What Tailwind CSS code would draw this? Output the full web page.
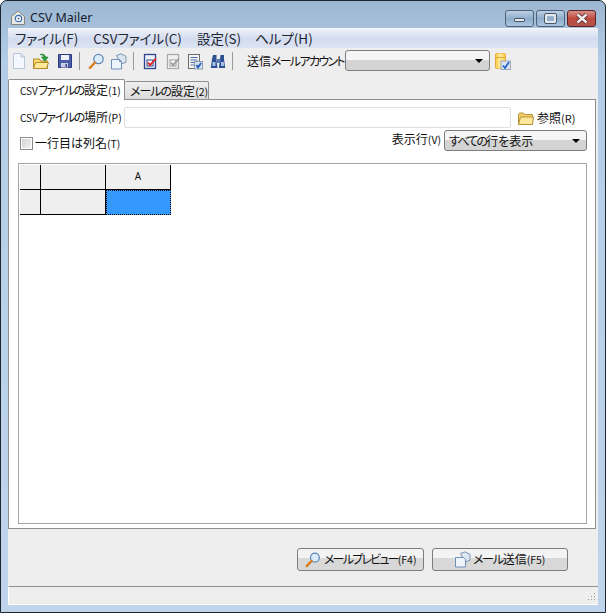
<!DOCTYPE html>
<html lang="ja"><head><meta charset="utf-8">
<script src="https://cdn.jsdelivr.net/npm/@tailwindcss/browser@4"></script>
</head>
<body class="bg-white">
<div class="w-[606px] h-[613px] overflow-hidden rounded-t-[7px] border border-[#1c2630] bg-[#bdd3ea] bg-gradient-to-b from-[#9db7d2] via-[#b4cde6] via-[10%] to-[#bfd5ec] flex flex-col text-[#111] font-['Noto_Sans_CJK_JP','Noto_Sans',sans-serif] [font-feature-settings:'palt'] text-[12px] leading-none">
  <div class="h-[27px] shrink-0 flex items-start pl-[9px] pr-[8px]">
    <svg class="mt-[9px] w-[16px] h-[16px]" viewBox="0 0 16 16"><path d="M1.500 6.500 8 1l6.500 5.500v8h-13z" fill="#e8e8e4" stroke="#85857f"/><circle cx="8.500" cy="8.500" r="3.200" fill="#f4f6fa" stroke="#3a6fb0" stroke-width="1.200"/><circle cx="8.500" cy="8.500" r="1" fill="#3a6fb0"/></svg>
    <span class="ml-[4px] mt-[8px] text-[12.500px] leading-[18px] text-[#15202c] font-['Noto_Sans','Noto_Sans_CJK_JP',sans-serif]">CSV Mailer</span>
    <div class="ml-auto mt-[9px] flex gap-[2px] pr-[1px]">
      <div class="w-[29px] h-[17px] rounded-[3px] border border-[#4c6078] bg-gradient-to-b from-[#bdd0e4] via-[#8fadcb] to-[#a9c6e0] flex items-center justify-center"><div class="w-[11px] h-[4px] mt-[3px] bg-[#e4e8ec] border border-[#4a5a6c] rounded-[1px]"></div></div>
      <div class="w-[29px] h-[17px] rounded-[3px] border border-[#4c6078] bg-gradient-to-b from-[#bdd0e4] via-[#8fadcb] to-[#a9c6e0] flex items-center justify-center"><div class="w-[11px] h-[9px] border-2 border-[#e4e8ec] outline outline-[#4a5a6c] rounded-[1px]"></div></div>
      <div class="w-[29px] h-[17px] rounded-[3px] border border-[#5a2326] bg-gradient-to-b from-[#d69088] via-[#bf4a3e] to-[#b1554d] flex items-center justify-center">
        <svg class="w-[14px] h-[11px]" viewBox="0 0 14 11"><path d="M2.500 1.500 11.500 9.500M11.500 1.500 2.500 9.500" stroke="#4a2426" stroke-width="4"/><path d="M2.500 1.500 11.500 9.500M11.500 1.500 2.500 9.500" stroke="#f2eeee" stroke-width="2.400"/></svg>
      </div>
    </div>
  </div>
  <div class="flex-1 mx-[7px] min-h-0 flex flex-col bg-[#eeeeee] border-t border-[#f4f7fb]">
    <div class="h-[19px] shrink-0 flex items-center bg-gradient-to-b from-[#eef1f9] via-[#d3dcef] to-[#dbe3f3] text-[13.500px] text-[#1d2530]">
      <span class="ml-[7px]">ファイル(F)</span>
      <span class="ml-[15px]">CSVファイル(C)</span>
      <span class="ml-[15px]">設定(S)</span>
      <span class="ml-[14px]">ヘルプ(H)</span>
    </div>
    <div class="h-[26px] shrink-0 flex items-center">
      <svg class="shrink-0 ml-[3px] w-[16px] h-[18px]" viewBox="0 0 16 18"><path d="M2.500 1.500H10L13.500 5v11.500h-11z" fill="#f4f7fd" stroke="#b8c6dc"/><path d="M10 1.500V5h3.500" fill="#dde5f2" stroke="#b8c6dc"/></svg>
      <svg class="shrink-0 ml-[5px] w-[19px] h-[18px]" viewBox="0 0 19 18"><path d="M1.500 16.500V7h6l1 2h7v7.500z" fill="#fbd96c" stroke="#b28a2a"/><path d="M1.500 16.500 3.500 10.500h13l-2 6z" fill="#fde997" stroke="#b28a2a"/><path d="M8 2.500c3-1 5 0 5.500 2.500H16l-3 4.500L9.500 5H12c-.5-1.500-2-2.300-4-2.500z" fill="#2f9e3c" stroke="#1f7a2b" stroke-width=".6"/></svg>
      <svg class="shrink-0 ml-[6px] w-[16px] h-[16px]" viewBox="0 0 16 16"><path d="M1.500 1.500h13v13h-13z" fill="#4d5da8" stroke="#2e3a80"/><rect x="4" y="2" width="8" height="5" fill="#eef0fa"/><rect x="4" y="10" width="7" height="4.500" fill="#c9cfe8"/><rect x="8.500" y="11" width="1.500" height="3" fill="#3a4a90"/></svg>
      <div class="shrink-0 ml-[6px] w-px h-[18px] bg-[#9a9a9a]"></div>
      <svg class="shrink-0 ml-[8px] w-[17px] h-[17px]" viewBox="0 0 17 17"><circle cx="10.500" cy="6" r="4.700" fill="#dcebfa" stroke="#5d86b4" stroke-width="1.300"/><path d="M7 9.500 1.800 15" stroke="#d9791b" stroke-width="2.400" stroke-linecap="round"/></svg>
      <svg class="shrink-0 ml-[6px] w-[16px] h-[17px]" viewBox="0 0 16 17"><path d="M5.500 2.500 10 .8l5 2.500v6L10 11z" fill="#dbe6f2" stroke="#7d95b0"/><path d="M.5 6.500h8l2 2v7.500h-10z" fill="#eef4fb" stroke="#6f8fb4"/><path d="M8.500 6.500v2h2" fill="none" stroke="#6f8fb4"/></svg>
      <div class="shrink-0 ml-[6px] w-px h-[18px] bg-[#9a9a9a]"></div>
      <svg class="shrink-0 ml-[9px] w-[16px] h-[17px]" viewBox="0 0 16 17"><rect x="1.500" y="1.500" width="11" height="14" fill="#eef1f8" stroke="#2f4390" stroke-width="1.300"/><rect x="4" y="7" width="6" height="6" fill="#fff" stroke="#2f4390"/><path d="M5 9.500 7 12 13 5.500" fill="none" stroke="#e01d1d" stroke-width="1.800"/></svg>
      <svg class="shrink-0 ml-[7px] w-[16px] h-[17px]" viewBox="0 0 16 17"><rect x="1.500" y="1.500" width="11" height="14" fill="#f1f1f1" stroke="#a8a8a8" stroke-width="1.200"/><rect x="4" y="7" width="6" height="6" fill="#fff" stroke="#999"/><path d="M5 9.500 7 12 13 5.500" fill="none" stroke="#999" stroke-width="1.800"/></svg>
      <svg class="shrink-0 ml-[5px] w-[17px] h-[17px]" viewBox="0 0 17 17"><rect x="1.500" y="1.500" width="11" height="14" fill="#f4f4f0" stroke="#6c6c68"/><path d="M3.500 4.500h7M3.500 7h7M3.500 9.500h4M3.500 12h4" stroke="#4a6ea8"/><rect x="7.500" y="8.500" width="8" height="7.500" fill="#d5e0ee" stroke="#8a9cb2"/><path d="M9.500 12 11 14.500 14 10" fill="none" stroke="#1d55b8" stroke-width="1.700"/></svg>
      <svg class="shrink-0 ml-[6px] w-[17px] h-[15px]" viewBox="0 0 17 15"><path d="M3 1h3.500v4h-.2L7.500 14H.8L2 5z" fill="#2d4f94"/><path d="M10.500 1H14v4l1.200 9H8.800L10 5z" fill="#2d4f94"/><rect x="6.500" y="5" width="4" height="4" fill="#5a7ab8"/><rect x="2.500" y="8" width="3" height="4" fill="#a8c0e4"/><rect x="11" y="8" width="3" height="4" fill="#a8c0e4"/></svg>
      <div class="shrink-0 ml-[5px] w-px h-[18px] bg-[#9a9a9a]"></div>
      <span class="shrink-0 ml-[14px] w-[98px] whitespace-nowrap text-[12px] leading-none">送信<span class="tracking-[-1.700px]">メールアカウント</span></span>
      <div class="shrink-0 w-[145px] h-[21px] -mt-px rounded-[3px] border border-[#7d7d7d] bg-gradient-to-b from-[#f5f5f5] from-[45%] to-[#d4d4d4] to-[45%] flex items-center justify-end pr-[6px]">
        <div class="w-0 h-0 border-x-[4px] border-x-transparent border-t-[4px] border-t-black"></div>
      </div>
      <svg class="shrink-0 ml-[5px] w-[16px] h-[17px]" viewBox="0 0 16 17"><rect x=".5" y=".5" width="10" height="15" rx="1" fill="#fcd45a" stroke="#e2a93a"/><rect x="3" y=".5" width="5" height="15" fill="#fde68f"/><path d="M.5 4.500h10" stroke="#e2a93a"/><rect x="6" y="8" width="9.500" height="8.500" fill="#dbe3ee" stroke="#9aa8ba"/><path d="M8 12.500 10 15 14 9" fill="none" stroke="#1d62c8" stroke-width="1.700"/></svg>
    </div>
    <div class="h-[25px] shrink-0 flex items-end relative">
      <div class="w-[117px] h-[21px] bg-white border border-b-0 border-[#8e8f8f] rounded-t-[2px] relative z-10 -mb-px pt-[2px] pl-[11px] text-[12px] leading-[16px] whitespace-nowrap"><span class="text-[10px]">CSV</span><span class="tracking-[-1.400px]">ファイルの</span>設定<span class="text-[10.500px]">(1)</span></div>
      <div class="w-[84px] h-[18px] bg-gradient-to-b from-[#efefef] to-[#dcdcdc] border border-l-0 border-b-0 border-[#8e8f8f] rounded-t-[2px] text-[12px] leading-[17px] pl-[5px] whitespace-nowrap"><span class="tracking-[-1px]">メールの</span>設定<span class="text-[10.500px]">(2)</span></div>
    </div>
    <div class="h-[430px] shrink-0 mr-[2px] bg-white border border-[#8e8f8f] flex flex-col pl-[9px] pr-[8px]">
      <div class="mt-[7px] h-[21px] shrink-0 flex items-center pl-[2px]">
        <span class="text-[12px] w-[104px] whitespace-nowrap"><span class="text-[10px]">CSV</span><span class="tracking-[-1.400px]">ファイルの</span>場所<span class="text-[10.500px]">(P)</span></span>
        <div class="w-[387px] h-[21px] border border-[#dedede] rounded-[2px] bg-white"></div>
        <svg class="shrink-0 ml-[7px] w-[16px] h-[13px] mt-[2px]" viewBox="0 0 16 13"><path d="M.5 12.500V2.500l1-1.500h4l1 1.500h8v10z" fill="#f5cf66" stroke="#b79238"/><path d="M.5 12.500 2.500 5h13l-1 7.500z" fill="#fde79b" stroke="#b79238"/></svg>
        <span class="ml-[3px] text-[12px] whitespace-nowrap">参照<span class="text-[11px]">(R)</span></span>
      </div>
      <div class="mt-[2px] h-[21px] shrink-0 flex items-start pl-[2px]">
        <div class="mt-[7px] w-[13px] h-[13px] border border-[#8a8a8a] bg-gradient-to-br from-[#d0d0d0] to-[#f4f4f4] outline outline-white -outline-offset-2"></div>
        <span class="mt-[6px] ml-[2px] text-[12px] leading-[14px] whitespace-nowrap">一行目は列名<span class="text-[10.500px]">(T)</span></span>
        <span class="ml-auto mt-[2px] text-[12px] leading-[14px] whitespace-nowrap">表示行<span class="text-[10.500px]">(V)</span></span>
        <div class="ml-[3px] w-[143px] h-[21px] rounded-[3px] border border-[#7d7d7d] bg-gradient-to-b from-[#f5f5f5] from-[45%] to-[#d4d4d4] to-[45%] flex items-center pl-[4px] pr-[6px] text-[12px]">
          <span class="whitespace-nowrap"><span class="tracking-[-1.800px]">すべての</span>行を表示</span>
          <div class="ml-auto w-0 h-0 border-x-[4px] border-x-transparent border-t-[4px] border-t-black"></div>
        </div>
      </div>
      <div class="mt-[12px] h-[361px] shrink-0 border border-[#a5a5a5] bg-white p-[1px]">
        <div class="grid grid-cols-[21px_65px_65px] grid-rows-[25px_25px] w-max text-[10px]">
          <div class="bg-[#efefef] border-r border-b border-black"></div>
          <div class="bg-[#efefef] border-r border-b border-black"></div>
          <div class="bg-[#efefef] border-r border-b border-black flex items-center justify-center pb-[3px] font-['Noto_Sans',sans-serif]">A</div>
          <div class="bg-[#efefef] border-r border-b border-black"></div>
          <div class="bg-[#efefef] border-r border-b border-black"></div>
          <div class="bg-[#3399ff] border border-dotted border-black"></div>
        </div>
      </div>
    </div>
    <div class="flex-1 min-h-0 flex items-start justify-end gap-[8px] pr-[30px] pt-[19px]">
      <div class="w-[127px] h-[23px] rounded-[3px] border border-[#7d7d7d] bg-gradient-to-b from-[#f3f3f3] from-[45%] to-[#d8d8d8] to-[45%] flex items-center pl-[7px] gap-[3px] whitespace-nowrap text-[12px]">
        <svg class="shrink-0 w-[16px] h-[16px]" viewBox="0 0 17 17"><circle cx="10.500" cy="6" r="4.700" fill="#dcebfa" stroke="#5d86b4" stroke-width="1.300"/><path d="M7 9.500 1.800 15" stroke="#d9791b" stroke-width="2.400" stroke-linecap="round"/></svg>
        <span><span class="tracking-[-1.800px]">メールプレビュー</span><span class="text-[10.500px]">(F4)</span></span>
      </div>
      <div class="w-[136px] h-[23px] rounded-[3px] border border-[#7d7d7d] bg-gradient-to-b from-[#f3f3f3] from-[45%] to-[#d8d8d8] to-[45%] flex items-center pl-[22px] gap-[2px] whitespace-nowrap text-[12px]">
        <svg class="shrink-0 w-[16px] h-[17px]" viewBox="0 0 16 17"><path d="M5.500 2.500 10 .8l5 2.500v6L10 11z" fill="#dbe6f2" stroke="#7d95b0"/><path d="M.5 6.500h8l2 2v7.500h-10z" fill="#eef4fb" stroke="#6f8fb4"/></svg>
        <span><span class="tracking-[-1.300px]">メール</span>送信<span class="text-[10.500px]">(F5)</span></span>
      </div>
    </div>
    <div class="h-[19px] shrink-0 border-t border-[#909094] bg-[#eeeeee] border-b border-l border-b-white border-l-white relative">
      <svg class="absolute right-[2px] bottom-[2px] w-[10px] h-[10px]" viewBox="0 0 10 10"><path d="M8 1h1v1H8zM5 4h1v1H5zM8 4h1v1H8zM2 7h1v1H2zM5 7h1v1H5zM8 7h1v1H8z" fill="#9a9a9a"/></svg>
    </div>
  </div>
  <div class="h-[7px] shrink-0"></div>
</div>
</body></html>
